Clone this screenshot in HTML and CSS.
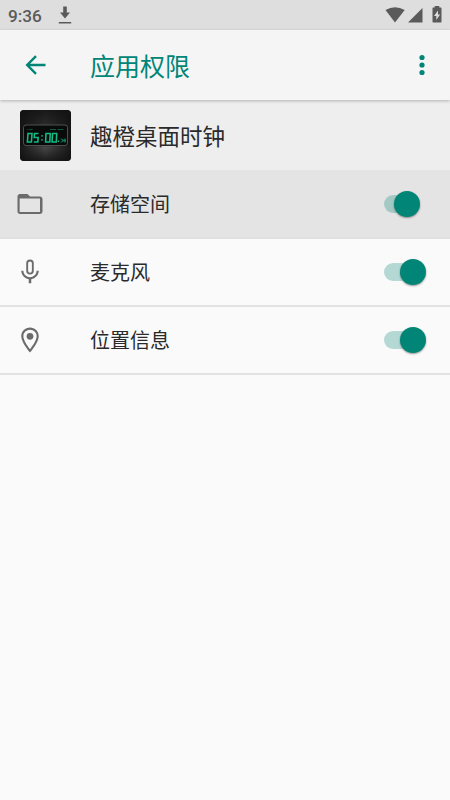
FILE: index.html
```html
<!DOCTYPE html>
<html lang="zh-CN">
<head>
<meta charset="utf-8">
<title>应用权限</title>
<link rel="stylesheet" href="styles.css">
</head>
<body>
<div class="status">
  <span class="time">9:36</span>
  <svg class="download" width="14" height="20" viewBox="0 0 14 20"><path d="M5.200 1.500h3.600v6H12l-5 6-5-6h3.200zM.8 16.900h12.400v1.600H.8z"/></svg>
  <svg class="signals" width="58" height="20" viewBox="0 0 58 20"><path d="M1.500 5Q11-.5 20.700 5L11 17.500z"/><path d="M38.500 3v14.500H24z"/><path fill-rule="evenodd" d="M50.700 1h4.600v1.500h1.500q.7 0 .7.700v13.600q0 .7-.7.700h-7.600q-.7 0-.7-.7V3.200q0-.7.7-.7h1.500zM54 5.500l-4 5.500h2.300v4l3.800-5.500h-2.100z"/></svg>
</div>
<header class="toolbar">
  <svg class="back" width="22" height="22" viewBox="0 0 22 22"><path d="M20.500 11H2.500M11 2.200L2.200 11l8.800 8.800"/></svg>
  <h1>应用权限</h1>
  <svg class="more" width="6" height="22" viewBox="0 0 6 22"><circle cx="3" cy="3.500" r="2.600"/><circle cx="3" cy="11" r="2.600"/><circle cx="3" cy="18.500" r="2.600"/></svg>
</header>
<main>
  <section class="app">
    <svg class="appicon" width="51" height="51" viewBox="0 0 51 51">
      <defs>
        <linearGradient id="shell" x2="0" y2="1"><stop offset="0" stop-color="#191919"/><stop offset=".3" stop-color="#2b2b2b"/><stop offset=".68" stop-color="#242424"/><stop offset=".73" stop-color="#484848"/><stop offset="1" stop-color="#1b1b1b"/></linearGradient>
        <linearGradient id="edge"><stop offset="0" stop-color="#111" stop-opacity=".9"/><stop offset=".5" stop-color="#111" stop-opacity="0"/><stop offset="1" stop-color="#111" stop-opacity=".9"/></linearGradient>
      </defs>
      <rect width="51" height="51" rx="4" fill="url(#shell)"/>
      <rect width="51" height="51" rx="4" fill="url(#edge)"/>
      <rect x="3.500" y="15" width="44" height="20.500" rx="2.500" fill="#080b0a" stroke="#555" stroke-width=".9"/>
      <g class="digits">
        <path d="M8 23.500h4l-.6 8.500H7.400zM18.500 23.500h-4l-.3 4h4l-.4 4.500h-4M26 23.500h4.200l-.4 8.500h-4.200zM32.500 23.500h4.200l-.4 8.500h-4.200z"/>
        <path class="thin" d="M22 25v1.700M22 29v1.700M38.500 30.500v1.500"/>
        <path class="small" d="M40.500 29h1.800v3h-1.800M45.500 29h-1.500v3h1.500zM42.500 30.500h3"/>
        <path class="faint" d="M7.500 19.500h1M9.500 19.500h3M30 19.500h6M37.500 19.500h6"/>
      </g>
    </svg>
    <h2>趣橙桌面时钟</h2>
  </section>
  <section class="row pressed">
    <svg class="icon" viewBox="0 0 24 24"><path d="M20 6h-8l-2-2H4c-1.100 0-2 .9-2 2v12c0 1.100.9 2 2 2h16c1.100 0 2-.9 2-2V8c0-1.100-.9-2-2-2zm0 12.400H3.700V7.600H20z"/></svg>
    <span class="label">存储空间</span>
    <span class="switch"><i></i></span>
  </section>
  <section class="row">
    <svg class="icon" viewBox="0 0 24 24"><path fill-rule="evenodd" d="M12 2a3 3 0 0 1 3 3v6a3 3 0 0 1-6 0V5a3 3 0 0 1 3-3zm0 1.500A1.500 1.500 0 0 0 10.500 5v6a1.500 1.500 0 0 0 3 0V5A1.500 1.500 0 0 0 12 3.500zM17.300 11c0 3-2.540 5.100-5.300 5.100S6.700 14 6.700 11H5c0 3.410 2.720 6.230 6 6.720V21h2v-3.280c3.280-.48 6-3.300 6-6.720z"/></svg>
    <span class="label">麦克风</span>
    <span class="switch"><i></i></span>
  </section>
  <section class="row">
    <svg class="icon" viewBox="0 0 24 24"><path fill-rule="evenodd" d="M12 2C8.130 2 5 5.130 5 9c0 5.250 7 13 7 13s7-7.750 7-13c0-3.870-3.130-7-7-7zM6.700 9a5.300 5.300 0 0 1 10.600 0c0 2.880-2.880 7.400-5.300 10.300C9.620 16.400 6.700 11.850 6.700 9z"/><circle cx="12" cy="9" r="2.700"/></svg>
    <span class="label">位置信息</span>
    <span class="switch"><i></i></span>
  </section>
</main>
</body>
</html>
```

FILE: styles.css
```css
* { box-sizing: border-box; }
body {
  margin: 0;
  min-height: 800px;
  background: #fafafa;
  color: #2a2a2a;
  font-family: Roboto, "Noto Sans CJK SC", sans-serif;
}
svg { display: block; flex: none; }
h1, h2 { margin: 0; font-weight: 400; }
.status {
  display: flex;
  align-items: center;
  height: 30px;
  padding: 0 8px;
  background: #dedede;
  color: #5a5a5a;
  fill: #5a5a5a;
}
.time { width: 50px; font-size: 17.200px; font-weight: 500; line-height: 30px; padding-top: 1px; }
.signals { margin-left: auto; }
.toolbar {
  position: relative;
  display: flex;
  align-items: center;
  height: 70px;
  padding: 0 25px;
  background: #f5f5f5;
  color: #008577;
  box-shadow: 0 1px 3px rgba(0, 0, 0, .25);
}
.back { margin-right: 43px; fill: none; stroke: #008577; stroke-width: 2.400; }
.toolbar h1 { padding-top: 5px; font-size: 25px; line-height: 36px; }
.more { margin-left: auto; fill: #008577; }
.app {
  display: flex;
  align-items: center;
  height: 70px;
  padding-left: 19.500px;
  background: #eee;
}
.appicon { margin-right: 19.500px; }
.app h2 { padding-top: 3px; font-size: 22.500px; line-height: 32px; }
.digits { fill: none; stroke: #13b883; stroke-width: 1.600; }
.thin { stroke-width: 1.300; }
.small { stroke-width: .8; opacity: .7; }
.faint { stroke-width: .9; opacity: .5; }
.row {
  display: flex;
  align-items: center;
  height: 68px;
  padding: 0 24px 1px 15px;
  border-bottom: 2px solid #e2e2e2;
}
.row.pressed {
  height: 69px;
  padding: 0 30px 0 15px;
  background: #e4e4e4;
  border-bottom: 2px solid #e0e0e0;
}
.icon { width: 30px; height: 30px; margin-right: 45px; fill: #6b6b6b; }
.label { padding-top: 3px; font-size: 20px; line-height: 28px; }
.switch {
  position: relative;
  display: flex;
  justify-content: flex-end;
  width: 42px;
  height: 26px;
  margin-left: auto;
}
.switch::before {
  content: "";
  position: absolute;
  left: 0;
  top: 4px;
  width: 34px;
  height: 18px;
  border-radius: 9px;
  background: rgba(0, 133, 119, .28);
}
.switch i {
  position: relative;
  width: 26px;
  height: 26px;
  border-radius: 50%;
  background: #008577;
  box-shadow: 0 1px 2px rgba(0, 0, 0, .4);
}
.pressed .switch { width: 36px; }
```
